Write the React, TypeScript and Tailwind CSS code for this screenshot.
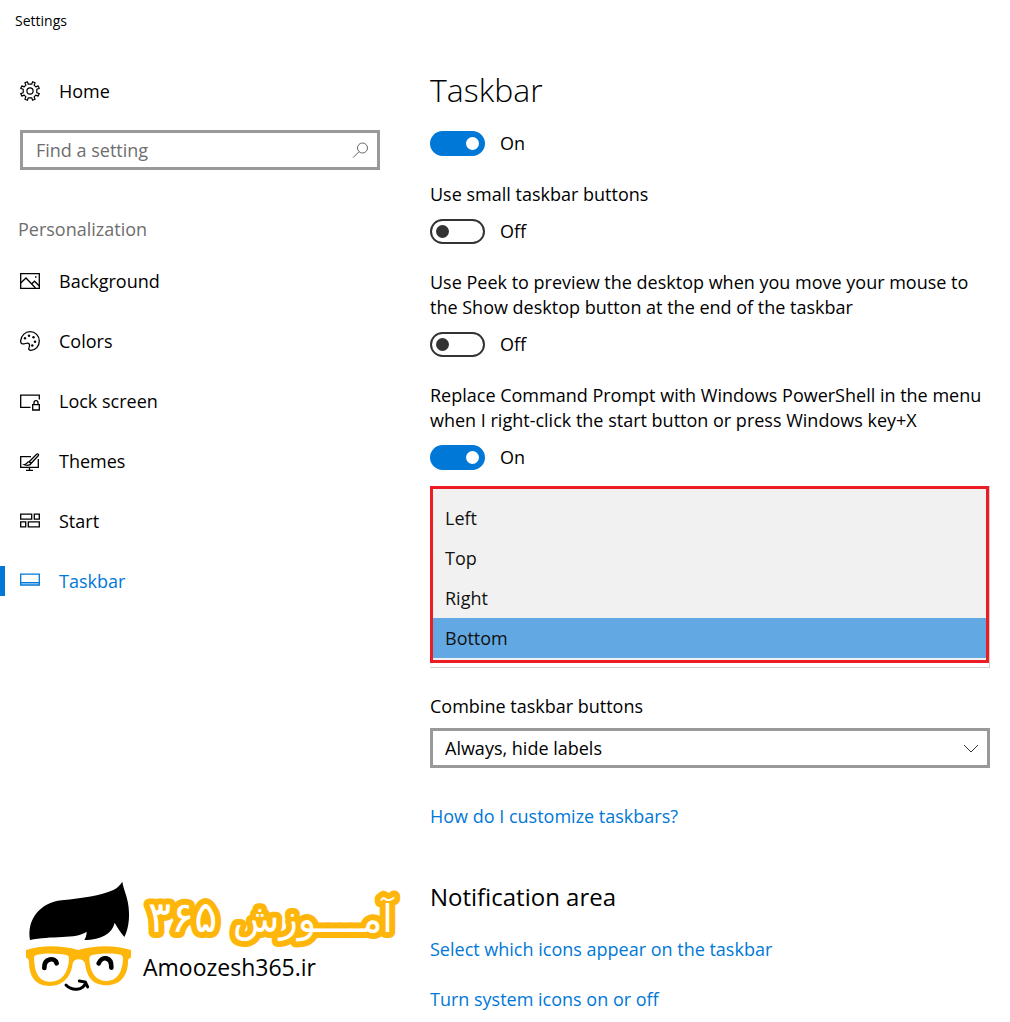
import React from "react";

type ToggleProps = { label: string; on?: boolean; hideLabel?: boolean };

function Toggle({ label, on = false, hideLabel = false }: ToggleProps) {
  const [checked, setChecked] = React.useState(on);
  return (
    <label className="block">
      {!hideLabel && <span className="mb-3 block">{label}</span>}
      <span className="flex h-[25px] items-center gap-[15px]">
        <input
          type="checkbox"
          role="switch"
          aria-label={label}
          checked={checked}
          onChange={(e) => setChecked(e.target.checked)}
          className="flex h-[25px] w-[55px] shrink-0 appearance-none items-center rounded-full border-2 border-[#333] px-1 before:size-[13px] before:rounded-full before:bg-[#333] checked:justify-end checked:border-[#0078d7] checked:bg-[#0078d7] checked:before:bg-white"
        />
        <span>{checked ? "On" : "Off"}</span>
      </span>
    </label>
  );
}

const svgProps = {
  viewBox: "0 0 20 20",
  width: 20,
  height: 20,
  fill: "none",
  stroke: "currentColor",
  strokeWidth: 1.3,
  "aria-hidden": true,
} as const;

function GearIcon() {
  return (
    <svg {...svgProps} strokeWidth={1.2}>
      <circle cx="10" cy="10" r="3.1" />
      <path
        d="M8.300 3.200 7.400.7 4.900 1.800l1 2.400L4.200 5.900 1.800 4.900.7 7.400l2.500.9v3.400l-2.500.9 1.100 2.500 2.400-1 1.700 1.700-1 2.400 2.500 1.100.9-2.500h3.400l.9 2.500 2.500-1.100-1-2.400 1.700-1.700 2.400 1 1.100-2.500-2.500-.9V8.300l2.500-.9-1.100-2.500-2.400 1-1.700-1.700 1-2.400L12.600.7l-.9 2.500z"
        strokeLinejoin="round"
      />
    </svg>
  );
}

function PictureIcon() {
  return (
    <svg {...svgProps}>
      <path d="M.7 2.700h18.600v14.600H.7z" />
      <path d="M.7 12 6 7l9.500 10M11.500 13l3-2.800 4.800 4.800" />
      <path d="M15 6h1.500" />
    </svg>
  );
}

function PaletteIcon() {
  return (
    <svg {...svgProps}>
      <path d="M.7 9.500C1.500 4.200 5.300.7 10 .7c5.300 0 9.300 4 9.300 9.300s-3.800 9.300-8.300 9.300c-1.900 0-2.700-1-2-2.600.9-2.200.7-3.600-.5-4.300-1.200-.8-2.500-.1-3.700.3C2 13.500.4 12.500.7 9.500z" />
      <g fill="currentColor" stroke="none">
        <circle cx="5" cy="7.300" r="1.200" />
        <circle cx="9" cy="4.800" r="1.200" />
        <circle cx="13.500" cy="6.300" r="1.200" />
        <circle cx="15" cy="10.800" r="1.200" />
        <circle cx="12.300" cy="14.500" r="1.200" />
      </g>
    </svg>
  );
}

function LockScreenIcon() {
  return (
    <svg {...svgProps}>
      <path d="M10.500 16.300H.7V4.200h18.600v4.300" />
      <path d="M12.700 13.700h6.600v5.300h-6.600zM14 13.700v-2a2 2 0 0 1 4 0v2" />
    </svg>
  );
}

function ThemesIcon() {
  return (
    <svg {...svgProps}>
      <path d="M11 5.700H.7v10.600h17.600V8M9.500 16.300V19M6 19.300h7" />
      <path d="m9.200 10.700 7.400-7.500c1.400-1 2.600.2 1.600 1.600L11 12.500M9.200 10.700c-2 0-2 2.500-4.700 3 2.500 1 6 .8 6.500-1.200z" />
    </svg>
  );
}

function StartIcon() {
  return (
    <svg {...svgProps}>
      <path d="M.7 3.200h11v5H.7zM14.300 3.200h5v5h-5zM.7 10.800h5v5h-5zM8.300 10.800h11v5h-11z" />
    </svg>
  );
}

function TaskbarIcon() {
  return (
    <svg {...svgProps}>
      <path d="M1 11.500h18v2.500H1z" fill="currentColor" fillOpacity=".5" stroke="none" />
      <path d="M.7 3.200h18.600v11H.7z" />
      <path d="M.7 11.500h18.600" strokeWidth="1" />
    </svg>
  );
}

function SearchIcon() {
  return (
    <svg viewBox="0 0 18 18" width="18" height="18" fill="none" stroke="#666" aria-hidden="true">
      <circle cx="11.500" cy="7" r="5" />
      <path d="m8 10.700-6 6" />
    </svg>
  );
}

function ChevronIcon() {
  return (
    <svg
      viewBox="0 0 16 10"
      width="16"
      height="10"
      fill="none"
      stroke="#333"
      aria-hidden="true"
      className="pointer-events-none absolute top-4 right-[11px]"
    >
      <path d="m1 1 7 7 7-7" />
    </svg>
  );
}

function Logo() {
  return (
    <svg viewBox="0 0 385 120" width="385" height="120" role="img" aria-label="Amoozesh365.ir">
      <g transform="scale(.3333)">
        <path d="M30 192C20 130 60 80 125 73 190 66 240 60 280 42c12-6 20-14 27-25 3 23 20 53 20 93 1 30-5 55-14 73-10-13-21-28-29-43-6 30-39 52-91 52 4-7 7-14 7-25-30 23-110 11-170 25z" />
        <path
          fill="#ffb60a"
          fillRule="evenodd"
          d="M18 222c42-14 102-16 157 0 55-16 115-14 158 0v23c-8 2-9 5-9 17-2 38-24 66-64 66-45 0-60-28-65-66q-5-12-19-12t-18 12c-3 38-28 68-68 68-45 0-62-30-63-68 0-12-2-15-9-17zM42 245c2 45 13 72 50 72 33 0 53-27 55-69q0-8-5-10c-22-6-62-8-90-2q-10 2-10 9zm166 3c2 42 20 67 52 67 30 0 48-25 49-69q0-7-7-10c-22-5-62-5-88 2q-6 2-6 10z"
        />
        <g fill="none" stroke="#000" strokeLinecap="round">
          <path strokeWidth="14" d="M73 276c-1-31 32-33 37-14M236 262c9-22 39-22 38 13" />
          <path strokeWidth="9" d="M138 327c17 18 52 18 59-7M178 315l18 3 7 15" />
        </g>
      </g>
      <g
        className="font-['DejaVu_Sans',sans-serif]"
        fill="#fff"
        stroke="#ffb60a"
        strokeWidth="12"
        strokeLinejoin="round"
        paintOrder="stroke"
      >
        <text x="128" y="56" fontSize="43">
          ۳۶۵
        </text>
        <text x="213" y="56" fontSize="38">
          آمــــوزش
        </text>
      </g>
      <text x="123" y="100" fontSize="23" className="font-['Open_Sans',sans-serif]">
        Amoozesh365.ir
      </text>
    </svg>
  );
}

const navItems = [
  { label: "Background", icon: <PictureIcon /> },
  { label: "Colors", icon: <PaletteIcon /> },
  { label: "Lock screen", icon: <LockScreenIcon /> },
  { label: "Themes", icon: <ThemesIcon /> },
  { label: "Start", icon: <StartIcon /> },
  { label: "Taskbar", icon: <TaskbarIcon />, active: true },
];

const positions = ["Left", "Top", "Right", "Bottom"];

export default function App() {
  const [position, setPosition] = React.useState("Bottom");
  return (
    <div className="min-h-screen bg-white font-['Open_Sans',sans-serif] text-[18px] leading-[25px] text-black">
      <header className="px-[15px] pt-2 text-[14px]">Settings</header>
      <div className="flex items-start pt-[33px]">
        <aside className="w-[410px] shrink-0">
          <a href="#home" className="flex h-[50px] items-center gap-[19px] pl-5">
            <GearIcon />
            Home
          </a>
          <label className="mt-[14px] ml-5 flex h-10 w-[360px] items-center border-3 border-[#999] pr-2 pl-[13px]">
            <input
              type="search"
              aria-label="Find a setting"
              placeholder="Find a setting"
              className="min-w-0 flex-1 outline-none placeholder:text-[#6e6e6e]"
            />
            <SearchIcon />
          </label>
          <h2 className="mt-[47px] mb-[9px] pl-[18px] text-[#6e6e6e]">Personalization</h2>
          <nav>
            {navItems.map((item) => (
              <a
                key={item.label}
                href={"#" + item.label.toLowerCase().replace(" ", "-")}
                aria-current={item.active ? "page" : undefined}
                className={item.active ? "flex h-[60px] items-center text-[#0078d7]" : "flex h-[60px] items-center"}
              >
                <span className={item.active ? "mr-[15px] h-[30px] w-[5px] bg-[#0078d7]" : "mr-[15px] w-[5px]"} />
                {item.icon}
                <span className="ml-[19px]">{item.label}</span>
              </a>
            ))}
          </nav>
          <div className="mt-[265px] pl-5">
            <Logo />
          </div>
        </aside>
        <main className="mr-5 ml-5 min-w-0 flex-1 pb-[10px]">
          <h1 className="text-[32px] leading-[48px] font-light">Taskbar</h1>
          <div className="mt-[17px] flex flex-col gap-[26px]">
            <Toggle label="Lock the taskbar" on hideLabel />
            <Toggle label="Use small taskbar buttons" />
            <Toggle label="Use Peek to preview the desktop when you move your mouse to the Show desktop button at the end of the taskbar" />
            <Toggle
              label="Replace Command Prompt with Windows PowerShell in the menu when I right-click the start button or press Windows key+X"
              on
            />
          </div>
          <div className="mt-4 border-r border-b border-[#d0d0d0] pb-1">
            <ul
              role="listbox"
              aria-label="Taskbar location on screen"
              className="border-3 border-[#ed1c24] bg-[#f1f1f1] pt-[9px] pb-[2px]"
            >
              {positions.map((p) => (
                <li key={p} role="option" aria-selected={p === position}>
                  <button
                    type="button"
                    onClick={() => setPosition(p)}
                    className={
                      p === position
                        ? "block h-10 w-full bg-[#62a8e3] px-3 text-left text-[#111]"
                        : "block h-10 w-full px-3 text-left text-[#111]"
                    }
                  >
                    {p}
                  </button>
                </li>
              ))}
            </ul>
          </div>
          <label htmlFor="combine" className="mt-[26px] block">
            Combine taskbar buttons
          </label>
          <div className="relative mt-[9px]">
            <select id="combine" className="block h-10 w-full appearance-none border-3 border-[#999] bg-white px-3">
              <option>Always, hide labels</option>
              <option>When taskbar is full</option>
              <option>Never</option>
            </select>
            <ChevronIcon />
          </div>
          <a href="#customize" className="mt-9 block text-[#0078d7]">
            How do I customize taskbars?
          </a>
          <h2 className="mt-[52px] text-[24px] leading-8">Notification area</h2>
          <a href="#select-icons" className="mt-6 block text-[#0078d7]">
            Select which icons appear on the taskbar
          </a>
          <a href="#system-icons" className="mt-[25px] block text-[#0078d7]">
            Turn system icons on or off
          </a>
        </main>
      </div>
    </div>
  );
}
